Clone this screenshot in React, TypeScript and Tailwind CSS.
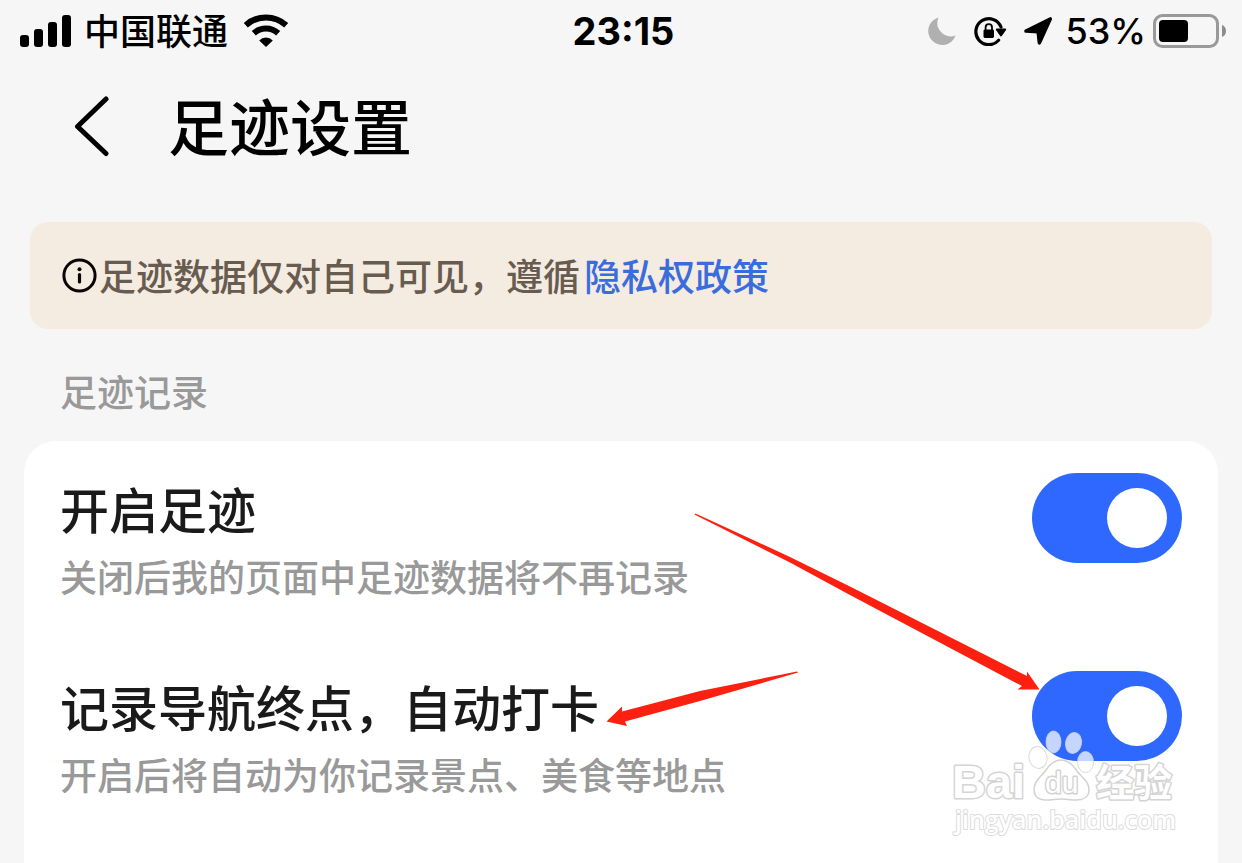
import { useState } from "react";

const rows = [
  {
    id: "footprint",
    title: "开启足迹",
    note: "关闭后我的页面中足迹数据将不再记录",
  },
  {
    id: "checkin",
    title: "记录导航终点，自动打卡",
    note: "开启后将自动为你记录景点、美食等地点",
  },
];

function SignalIcon() {
  return (
    <svg width="52" height="34" viewBox="0 0 52 34" aria-hidden="true">
      <rect x="0" y="21" width="9" height="12" rx="3" />
      <rect x="14" y="15" width="9" height="18" rx="3" />
      <rect x="28" y="8" width="9" height="25" rx="3" />
      <rect x="42" y="1" width="9" height="32" rx="3" />
    </svg>
  );
}

function WifiIcon() {
  return (
    <svg width="46" height="34" viewBox="0 0 46 34" aria-hidden="true">
      <g fill="none" stroke="#000" strokeWidth="6">
        <path d="M2.8 11.2 A30 30 0 0 1 43.2 11.2" />
        <path d="M10.8 19.2 A18 18 0 0 1 35.200 19.2" />
      </g>
      <path d="M23 33 L16.2 26.4 A9.6 9.6 0 0 1 29.8 26.4 Z" />
    </svg>
  );
}

function MoonIcon() {
  return (
    <svg width="28" height="30" viewBox="0 0 28 30" fill="#b0b0b0" aria-hidden="true">
      <path d="M10.500 1.500 A14 14 0 1 0 27.500 19.500 A13.500 13.500 0 0 1 10.500 1.500 Z" />
    </svg>
  );
}

function RotationLockIcon() {
  return (
    <svg width="33" height="30" viewBox="0 0 33 30" aria-hidden="true">
      <path d="M27 11 A13 13 0 1 0 24.600 24.300" fill="none" stroke="#000" strokeWidth="3.200" strokeLinecap="round" />
      <path d="M22.800 13.500 H31.200 L27 19.500 Z" stroke="#000" strokeWidth="2" strokeLinejoin="round" />
      <rect x="9.500" y="13.500" width="10.500" height="8.500" rx="1.400" />
      <path d="M11.600 14 V11.400 A3.200 3.200 0 0 1 18 11.400 V14" fill="none" stroke="#000" strokeWidth="1.800" />
    </svg>
  );
}

function LocationIcon() {
  return (
    <svg width="30" height="30" viewBox="0 0 30 30" aria-hidden="true">
      <path
        d="M27.200 3 L16.400 26.800 L15.200 15.800 L3 15 Z"
        stroke="#000"
        strokeWidth="3.600"
        strokeLinejoin="round"
      />
    </svg>
  );
}

function BatteryIcon() {
  return (
    <svg width="74" height="34" viewBox="0 0 74 34" aria-hidden="true">
      <rect x="1.500" y="1.500" width="63" height="31" rx="8" fill="none" stroke="#999" strokeWidth="3" />
      <rect x="6" y="6" width="29" height="22" rx="4" />
      <path d="M69 11 A6.500 6.500 0 0 1 69 23 Z" fill="#8c8c8c" />
    </svg>
  );
}

function InfoIcon() {
  return (
    <svg className="shrink-0" width="35" height="35" viewBox="0 0 35 35" aria-hidden="true">
      <circle cx="17.500" cy="17.500" r="15.600" fill="none" stroke="#0c0403" strokeWidth="3" />
      <circle cx="17.500" cy="11.200" r="2" fill="#0c0403" />
      <path d="M17.500 16.500 V24" stroke="#0c0403" strokeWidth="3.200" strokeLinecap="round" />
    </svg>
  );
}

function Watermark() {
  return (
    <svg
      className="pointer-events-none absolute right-[38px] top-[286px]"
      width="232"
      height="114"
      viewBox="948 727 232 114"
      aria-hidden="true"
    >
      <g fill="#fff" fillOpacity="0.720" stroke="#d2d2d2" strokeOpacity="0.800">
        <ellipse cx="1053.500" cy="742" rx="7.500" ry="11" />
        <ellipse cx="1073.500" cy="743" rx="8" ry="10.500" transform="rotate(12 1073.5 743)" />
        <ellipse cx="1038" cy="757.500" rx="9" ry="11" transform="rotate(-12 1038 757.5)" />
        <ellipse cx="1085.500" cy="762" rx="8" ry="10.500" />
      </g>
      <path
        d="M1061 760 C1068 760 1072 764 1077 771 C1082 778 1089 781 1089 790 C1089 797 1083 800 1076 800 C1070 800 1067 799 1062 799 C1056 799 1052 800 1046 800 C1038 800 1034 796 1034 789 C1034 781 1041 777 1046 770 C1050 764 1054 760 1061 760 Z"
        fill="#fff"
        fillOpacity="0.900"
        stroke="#d2d2d2"
        strokeWidth="1.500"
      />
      <g fill="#fff" stroke="#d4d4d4" strokeWidth="3" strokeLinejoin="round" style={{ paintOrder: "stroke" }}>
        <text x="952" y="798" fontSize="47" fontWeight="700" fontFamily="Liberation Sans, sans-serif">
          Bai
        </text>
        <text x="1045" y="793" fontSize="30" fontFamily="Liberation Sans, sans-serif">
          du
        </text>
        <text x="1096" y="796" fontSize="38" fontWeight="700" fontFamily="Noto Sans CJK SC, sans-serif">
          经验
        </text>
      </g>
      <text
        x="955"
        y="829"
        fontSize="25"
        fontWeight="600"
        fontFamily="Open Sans, sans-serif"
        fill="#fff"
        stroke="#dcdcdc"
        strokeWidth="2"
        strokeLinejoin="round"
        style={{ paintOrder: "stroke" }}
      >
        jingyan.baidu.com
      </text>
    </svg>
  );
}

export default function App() {
  const [enabled, setEnabled] = useState<Record<string, boolean>>({ footprint: true, checkin: true });

  return (
    <div className="flex min-h-screen flex-col overflow-hidden bg-[#f6f6f6] font-['Inter','Noto_Sans_CJK_SC',sans-serif] font-medium text-black">
      <div className="grid h-[62px] grid-cols-[1fr_auto_1fr] items-center pl-5 pr-[15px]">
        <div className="flex items-center gap-3">
          <SignalIcon />
          <span className="pt-[2px] text-[36px] leading-[48px]">中国联通</span>
          <span className="ml-[3px]"><WifiIcon /></span>
        </div>
        <time className="text-[38px] font-bold leading-[48px]">23:15</time>
        <div className="flex items-center justify-end">
          <MoonIcon />
          <span className="ml-[18px]"><RotationLockIcon /></span>
          <span className="ml-4"><LocationIcon /></span>
          <span className="ml-3 text-[36px] leading-[48px]">53%</span>
          <span className="ml-[7px]"><BatteryIcon /></span>
        </div>
      </div>

      <header className="flex h-[130px] items-center pl-[72px]">
        <button type="button" aria-label="返回" className="mr-[58px]">
          <svg width="38" height="62" viewBox="0 0 38 62" fill="none" aria-hidden="true">
            <path d="M34 3 L5.500 30.500 L34 57.500" stroke="#000" strokeWidth="5" strokeLinecap="round" strokeLinejoin="round" />
          </svg>
        </button>
        <h1 className="pt-1 text-[61px] leading-[80px]">足迹设置</h1>
      </header>

      <main className="flex grow flex-col">
        <section className="mx-[30px] mt-[30px] flex h-[107px] items-center rounded-[18px] bg-[#f4ebe1] pl-8 text-[37px] text-[#685b50]">
          <InfoIcon />
          <p className="ml-[2px] flex pt-1 leading-[54px]">
            足迹数据仅对自己可见，遵循
            <a href="#privacy" className="ml-1 text-[#3a6cde]">
              隐私权政策
            </a>
          </p>
        </section>

        <h2 className="mt-[38px] pl-[60px] text-[37px] leading-[54px] text-[#999]">足迹记录</h2>

        <section className="relative mx-6 mt-5 grow rounded-t-[32px] bg-white pt-8">
          {rows.map((row) => (
            <div key={row.id} className="flex h-[198px] items-start justify-between px-9">
              <label htmlFor={row.id} className="flex flex-col pt-[5px]">
                <span className="text-[49px] leading-[68px] text-[#1a1a1a]">{row.title}</span>
                <span className="text-[37px] leading-[66px] text-[#999]">{row.note}</span>
              </label>
              <input
                id={row.id}
                type="checkbox"
                role="switch"
                checked={enabled[row.id]}
                onChange={(event) => setEnabled({ ...enabled, [row.id]: event.target.checked })}
                className="h-[90px] w-[150px] shrink-0 appearance-none rounded-full bg-gray-300 p-[15px] before:block before:size-[60px] before:rounded-full before:bg-white checked:bg-[#2e68ff] checked:before:translate-x-[60px]"
              />
            </div>
          ))}

          <svg
            className="pointer-events-none absolute left-[576px] top-[224px]"
            width="204"
            height="70"
            viewBox="600 665 204 70"
            fill="#fb2010"
            aria-hidden="true"
          >
            <path d="M797 671.500 L798 672.500 L700 701 L625 721.500 L627 726 L606.500 721.500 L622 706.500 V711.500 L700 691 Z" />
          </svg>
          <svg
            className="pointer-events-none absolute right-[174px] top-[65px]"
            width="354"
            height="190"
            viewBox="690 506 354 190"
            fill="#fb2010"
            aria-hidden="true"
          >
            <path d="M694.500 514.500 L695.500 513.500 L790 557 L850 586.500 L1027 676 V671.500 L1039.500 689.500 H1017.500 L1022 686 L850 595 L790 562.500 Z" />
          </svg>
          <Watermark />
        </section>
      </main>
    </div>
  );
}
